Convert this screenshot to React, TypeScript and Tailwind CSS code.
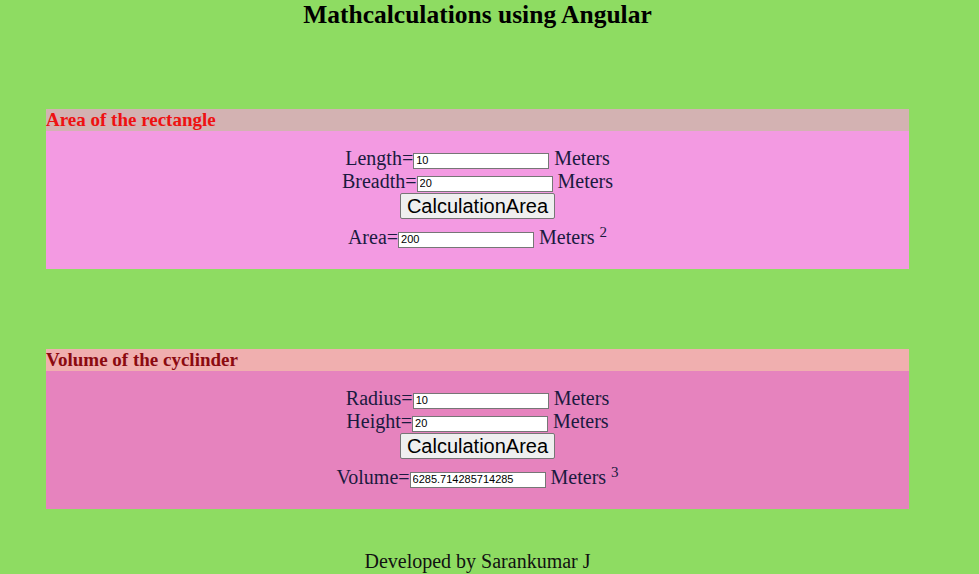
import React from "react";

const serif = "font-['Liberation_Serif',serif]";
const sans = "font-['Liberation_Sans',Arial,sans-serif]";

// one labelled input line: "Label=[input] Meters"
const Row = ({ label, value, power }: { label: string; value: string; power?: string }) => (
  <div className="leading-[23px]">
    {label}=
    <input
      readOnly
      value={value}
      className={`${sans} w-[136px] h-[16px] px-[2px] text-[11px] text-black bg-white border border-[#767676] align-[1px] outline-none`}
    />{" "}
    Meters
    {power && (
      <>
        {" "}
        <sup className="text-[15px]">{power}</sup>
      </>
    )}
  </div>
);

const Panel = ({
  title,
  titleColor,
  headBg,
  bodyBg,
  rows,
  result,
}: {
  title: string;
  titleColor: string;
  headBg: string;
  bodyBg: string;
  rows: { label: string; value: string }[];
  result: { label: string; value: string; power: string };
}) => (
  <section className="mx-[46px]">
    <div className={`${headBg} ${titleColor} h-[22px] text-[19px] font-bold leading-[22px]`}>{title}</div>
    <div className={`${bodyBg} pt-[16px] pb-[20px] text-center text-[20px] text-[#1a1a40]`}>
      {rows.map((r) => (
        <Row key={r.label} label={r.label} value={r.value} />
      ))}
      <div className="h-[28px] flex items-start justify-center">
        <button
          className={`${sans} h-[26px] px-[6px] text-[20px] leading-[22px] text-black bg-[#efefef] border border-[#767676] rounded-[2px]`}
        >
          CalculationArea
        </button>
      </div>
      <div className="mt-[5px]">
        <Row label={result.label} value={result.value} power={result.power} />
      </div>
    </div>
  </section>
);

export default function App() {
  return (
    <div className={`${serif} w-[979px] h-[574px] bg-[#8edc62] overflow-hidden`}>
      <div className="w-[955px]">
        <h1 className="text-center text-[25.5px] font-bold leading-[30px] text-black">
          Mathcalculations using Angular
        </h1>
        <div className="h-[79px]" />
        <Panel
          title="Area of the rectangle"
          titleColor="text-[#ee1111]"
          headBg="bg-[#d3b2b2]"
          bodyBg="bg-[#f39ae2]"
          rows={[
            { label: "Length", value: "10" },
            { label: "Breadth", value: "20" },
          ]}
          result={{ label: "Area", value: "200", power: "2" }}
        />
        <div className="h-[80px]" />
        <Panel
          title="Volume of the cyclinder"
          titleColor="text-[#8b0a10]"
          headBg="bg-[#f0afaf]"
          bodyBg="bg-[#e683be]"
          rows={[
            { label: "Radius", value: "10" },
            { label: "Height", value: "20" },
          ]}
          result={{ label: "Volume", value: "6285.714285714285", power: "3" }}
        />
        <p className="mt-[41px] text-center text-[20px] leading-[23px] text-[#111]">
          Developed by Sarankumar J
        </p>
      </div>
    </div>
  );
}
